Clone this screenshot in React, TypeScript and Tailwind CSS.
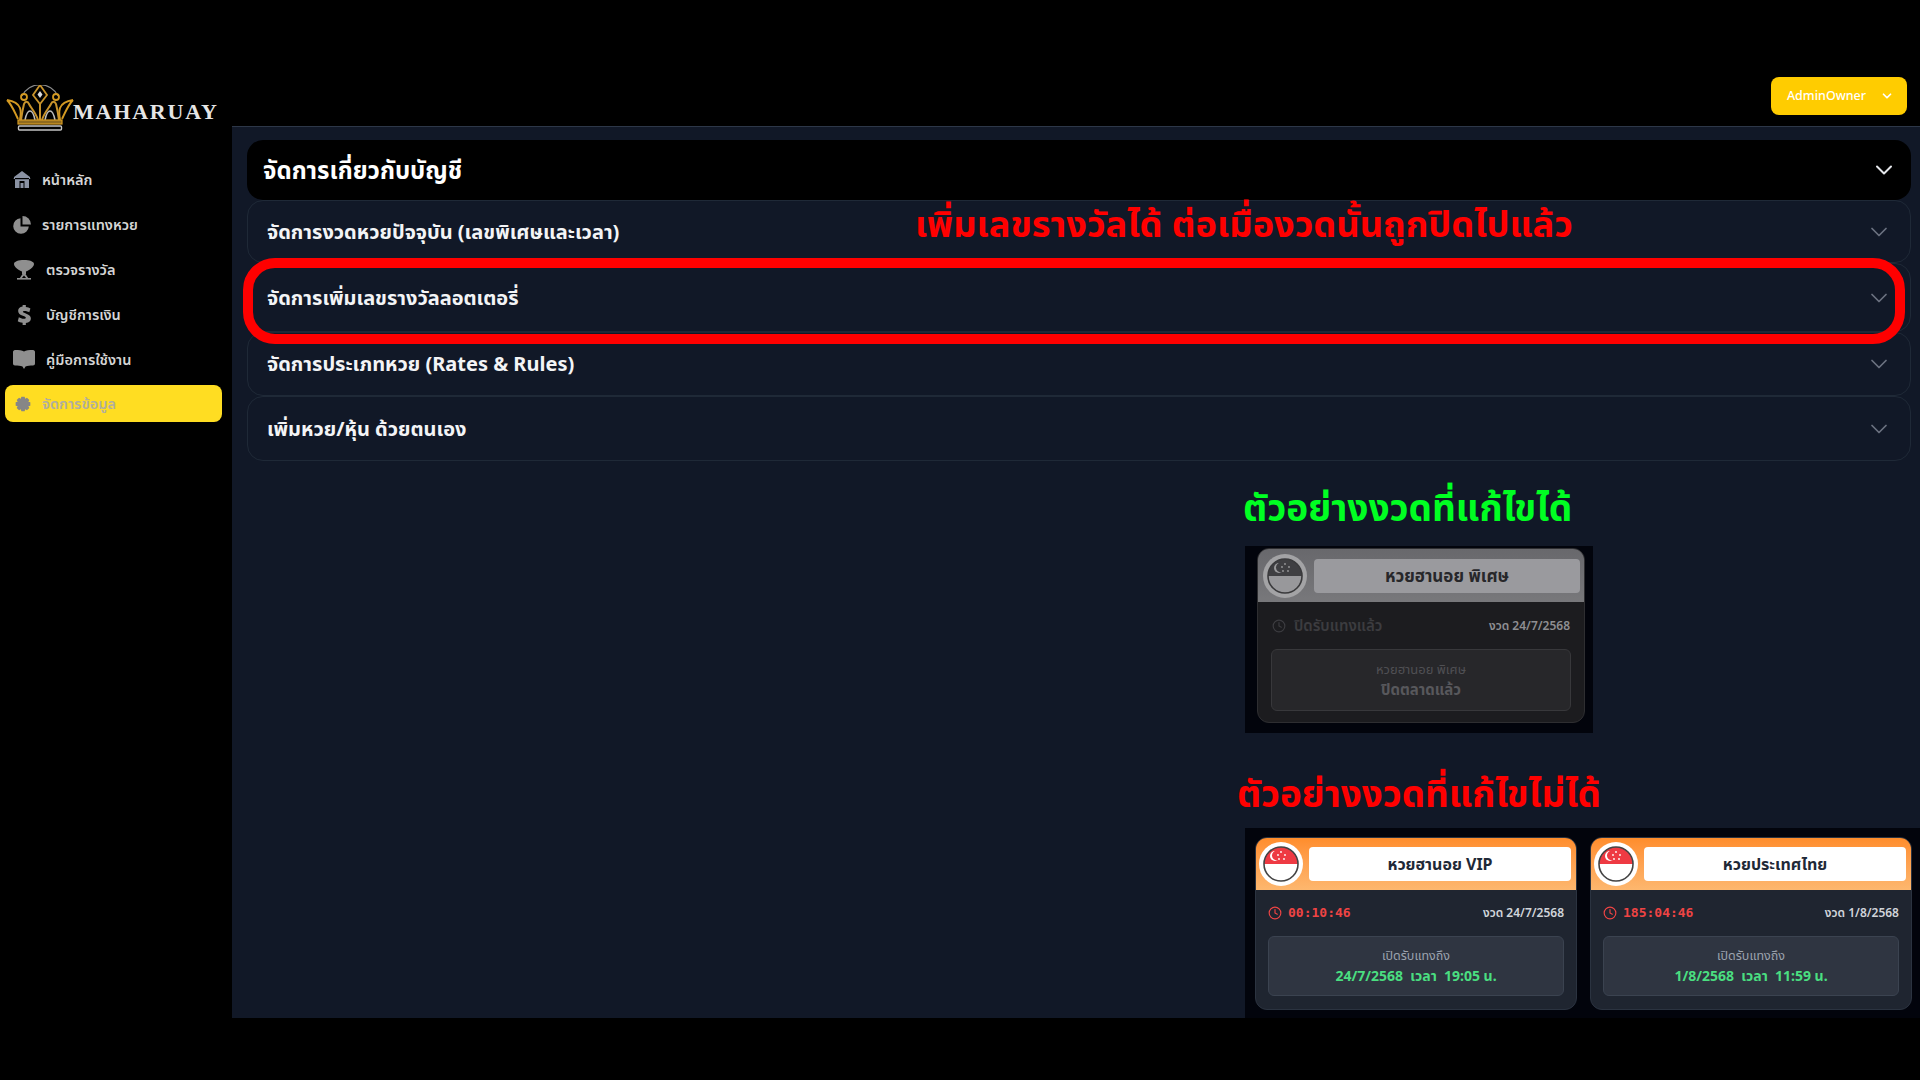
import { ChevronDown, Clock } from 'lucide-react';

const FONT = "font-['Noto_Sans','Noto_Sans_Thai','Liberation_Sans',sans-serif]";

const navItems = [
  { label: 'หน้าหลัก', icon: 'home' },
  { label: 'รายการแทงหวย', icon: 'pie' },
  { label: 'ตรวจรางวัล', icon: 'trophy' },
  { label: 'บัญชีการเงิน', icon: 'dollar' },
  { label: 'คู่มือการใช้งาน', icon: 'book' },
];

const sections = [
  { title: 'จัดการงวดหวยปัจจุบัน (เลขพิเศษและเวลา)', h: 'h-[63px]' },
  { title: 'จัดการเพิ่มเลขรางวัลลอตเตอรี่', h: 'h-[69px]' },
  { title: 'จัดการประเภทหวย (Rates & Rules)', h: 'h-[64px]' },
  { title: 'เพิ่มหวย/หุ้น ด้วยตนเอง', h: 'h-[65px]' },
];

function NavIcon({ name }: { name: string }) {
  if (name === 'home')
    return (
      <span className="w-[18px] flex shrink-0">
        <svg viewBox="0 0 18 17" className="w-[18px] h-[17px] fill-[#8a92a3]">
          <path d="M9 0 1 6v1.500L0 8h2v9h14V8h2l-1-.500V6z" />
          <rect x="2" y="7" width="14" height="1.200" fill="#000" />
          <rect x="6.500" y="10" width="5" height="7" fill="#000" />
          <rect x="7.500" y="12" width="3" height="5" fill="#8a92a3" />
        </svg>
      </span>
    );
  if (name === 'pie')
    return (
      <span className="w-[18px] flex shrink-0">
        <svg viewBox="0 0 18 18" className="w-[18px] h-[18px] fill-[#8f8f8f]">
          <path d="M7.500 2.200A7.800 7.800 0 1 0 15.800 10.500H7.500z" />
          <path d="M9.500 0v8.500H18A8.500 8.500 0 0 0 9.500 0z" />
        </svg>
      </span>
    );
  if (name === 'trophy')
    return (
      <svg viewBox="0 0 22 20" className="w-[22px] h-[20px] shrink-0 fill-[#8f8f8f]">
        <path d="M1 4c0-2.500 4.500-4 10-4s10 1.500 10 4c0 3-5 6.500-8 7.500V14H9v-2.500C6 10.500 1 7 1 4z" />
        <path d="M9.500 14h3l3 4.500h-2l-2.500-3-2.500 3h-2z" />
        <rect x="4" y="18" width="14" height="1.600" />
      </svg>
    );
  if (name === 'dollar')
    return (
      <svg viewBox="0 0 24 24" className="w-[22px] h-[22px] shrink-0 fill-[#8f8f8f]">
        <path d="M10.500 1h3.500v2.300c2 .2 3.800.8 5 1.500l-1.200 4.200c-1.500-.8-3.200-1.500-5-1.500-1.500 0-2 .5-2 1 0 .7 1 1.100 3.700 2.100 3.400 1.200 5 2.800 5 5.200 0 2.600-1.900 4.500-5.500 5V23H10.500v-2.500c-2.200-.2-4.200-.9-5.300-1.700l1.200-4.300c1.500.9 3.500 1.700 5.400 1.700 1.300 0 2.200-.5 2.200-1.300 0-.8-1-1.300-3.200-2.100-3.200-1.100-5.200-2.600-5.200-5.200 0-2.400 1.700-4.300 4.900-4.800z" />
      </svg>
    );
  return (
    <svg viewBox="0 0 22 19" className="w-[22px] h-[19px] shrink-0 fill-[#8f8f8f]">
      <path d="M0 2C0 1 .8 0 2 0c4 0 7 .4 9 1.500C13 .4 16 0 20 0c1.200 0 2 1 2 2v11.500c0 1-.8 2-2 2-3 0-5.500.3-7.500 1L11 19l-1.500-2.500c-2-.7-4.500-1-7.500-1-1.200 0-2-1-2-2z" />
    </svg>
  );
}

function GearIcon() {
  return (
    <svg viewBox="0 0 24 24" className="w-4 h-4 shrink-0 fill-[#868686]">
      <path d="M9.500 1h5l.8 3 2.600-1.500 3.600 3.600-1.500 2.600 3 .8v5l-3 .8 1.500 2.600-3.600 3.600-2.600-1.500-.8 3h-5l-.8-3-2.600 1.500-3.600-3.600 1.500-2.600-3-.8v-5l3-.8-1.500-2.600 3.600-3.600 2.600 1.500z" />
    </svg>
  );
}

function CrownLogo() {
  return (
    <svg viewBox="0 0 68 46" className="w-[68px] h-[46px] shrink-0" fill="none">
      <path d="M16 11A20 20 0 0 1 52 11" stroke="#8a8a8a" strokeWidth="1.200" />
      <path d="M34 0 27 10l7 9 7-9z" stroke="#c8932b" strokeWidth="1.800" />
      <path d="M34 6l-2.500 3.500L34 13l2.500-3.500z" fill="#dcdcdc" />
      <path d="M1 15c7 1 11 3 13 8 1 3 1 7 0 12M12 34C8 26 6 20 1 15" stroke="#d49a22" strokeWidth="2" />
      <path d="M67 15c-7 1-11 3-13 8-1 3-1 7 0 12M56 34c4-8 6-14 11-19" stroke="#d49a22" strokeWidth="2" />
      <path d="M15 35c1-7 2-12 3-16 1-3 4-3 5 0 2 4 7 9 9 16M53 35c-1-7-2-12-3-16-1-3-4-3-5 0-2 4-7 9-9 16" stroke="#c8932b" strokeWidth="2" />
      <circle cx="18" cy="12" r="3" stroke="#d49a22" strokeWidth="1.800" />
      <circle cx="50" cy="12" r="3" stroke="#d49a22" strokeWidth="1.800" />
      <path d="M19 35c1-5 3-9 5-9s4 4 5 9M49 35c-1-5-3-9-5-9s-4 4-5 9" stroke="#bdbdbd" strokeWidth="1.500" />
      <path d="M33 19h2v16h-2z" fill="#c8932b" />
      <rect x="12" y="35" width="44" height="4" fill="#8f6a1e" stroke="#d49a22" strokeWidth="1.200" />
      <rect x="12.500" y="41" width="43" height="4" rx="1" stroke="#c4c4c4" strokeWidth="1.400" />
    </svg>
  );
}

function Flag({ muted }: { muted?: boolean }) {
  const ring = muted ? 'bg-[#a3a3a5]' : 'bg-white';
  return (
    <div className={`w-[44px] h-[44px] rounded-full flex items-center justify-center shrink-0 ${ring}`}>
      <svg viewBox="0 0 36 36" className="w-[36px] h-[36px]">
        <path d="M1 18a17 17 0 0 1 34 0z" fill={muted ? '#3f3f42' : '#ee3a43'} />
        <path d="M1 18a17 17 0 0 0 34 0z" fill={muted ? '#98989b' : '#ffffff'} />
        <circle cx="18" cy="18" r="17" fill="none" stroke={muted ? '#3a3a3c' : '#444444'} strokeWidth="1.600" />
        <circle cx="12" cy="10" r="5" fill={muted ? '#9a9a9c' : '#ffffff'} />
        <circle cx="14" cy="9.500" r="5" fill={muted ? '#3f3f42' : '#ee3a43'} />
        {[[18, 6], [22, 9], [21, 13], [16, 13], [15, 9]].map(([x, y]) => (
          <circle key={`${x}-${y}`} cx={x} cy={y} r="0.900" fill={muted ? '#9a9a9c' : '#ffffff'} />
        ))}
      </svg>
    </div>
  );
}

function OpenCard({ name, time, draw, until }: { name: string; time: string; draw: string; until: string }) {
  return (
    <div className="w-[322px] h-[173px] rounded-xl bg-[#1f2530] border border-[#2b3340] overflow-hidden flex flex-col">
      <div className="h-[52px] shrink-0 bg-gradient-to-b from-[#ff8d2b] to-[#fdb76e] flex items-center pl-[3px] pr-[5px] gap-[6px]">
        <Flag />
        <div className="flex-1 h-[34px] rounded bg-white flex items-center justify-center text-[16px] font-bold text-[#1f2937]">
          {name}
        </div>
      </div>
      <div className="flex items-center justify-between px-3 h-[46px]">
        <span className="flex items-center gap-[6px] text-[13px] font-bold text-[#ef4444] font-['DejaVu_Sans_Mono',monospace]">
          <Clock size={14} strokeWidth={2} />
          {time}
        </span>
        <span className="text-[12px] font-semibold text-[#d1d5db]">{draw}</span>
      </div>
      <div className="mx-3 h-[60px] rounded-md bg-[#2f3541] border border-[#3b4350] flex flex-col items-center justify-center gap-[1px]">
        <span className="text-[12.500px] leading-[18px] text-[#9ca3af]">เปิดรับแทงถึง</span>
        <span className="text-[14px] leading-[20px] font-bold text-[#4ade80] whitespace-pre">{until}</span>
      </div>
    </div>
  );
}

export default function App() {
  return (
    <div className={`flex w-[1920px] h-[1080px] bg-black overflow-hidden relative ${FONT}`}>
      {/* Sidebar */}
      <aside className="w-[232px] shrink-0 bg-black pl-[5px] pr-[10px]">
        <div className="flex items-end mt-[85px] h-[46px] pl-[1px]">
          <CrownLogo />
          <span className="-ml-[1px] mb-[5px] text-[22px] leading-[28px] font-bold tracking-[1.800px] text-[#e5e5e5] font-['Liberation_Serif',serif]">
            MAHARUAY
          </span>
        </div>
        <nav className="mt-[26px] flex flex-col">
          {navItems.map(item => (
            <div key={item.label} className="h-[45px] flex items-center gap-[11px] pl-[8px] text-[14.500px] font-semibold text-[#d4d4d4]">
              <NavIcon name={item.icon} />
              <span>{item.label}</span>
            </div>
          ))}
          <div className="h-[37px] mt-[3px] rounded-lg bg-[#ffdd22] flex items-center gap-[11px] pl-[10px] text-[14.500px] font-semibold text-[#b0aea0]">
            <GearIcon />
            <span>จัดการข้อมูล</span>
          </div>
        </nav>
      </aside>

      <div className="flex-1 flex flex-col min-w-0">
        {/* Top bar */}
        <header className="h-[127px] shrink-0 bg-black border-b border-[#2d3748] flex justify-end items-start pt-[77px] pr-[13px]">
          <button className="w-[136px] h-[38px] rounded-lg bg-[#ffcc00] flex items-center justify-center gap-[14px] pl-[3px] text-[12.500px] font-medium text-white">
            AdminOwner
            <ChevronDown size={14} strokeWidth={3} />
          </button>
        </header>

        <main className="h-[891px] shrink-0 bg-[#111827] pl-[15px] pr-[9px] pt-[13px] overflow-hidden">
          <div className="h-[60px] rounded-2xl bg-black flex items-center justify-between pl-4 pr-[13px] text-[24px] font-bold text-white">
            <span>จัดการเกี่ยวกับบัญชี</span>
            <ChevronDown size={28} strokeWidth={1.700} className="text-[#e5e7eb]" />
          </div>
          {sections.map(s => (
            <div key={s.title} className={`${s.h} rounded-2xl border border-[#1f2937] flex items-center justify-between pl-[19px] pr-[17px] text-[20px] font-bold text-[#f3f4f6]`}>
              <span>{s.title}</span>
              <ChevronDown size={28} strokeWidth={1.500} className="text-[#6b7280]" />
            </div>
          ))}

          {/* Annotated examples */}
          <div className="ml-[996px] mt-[21px] w-[680px]">
            <h2 className="text-[37px] leading-[50px] font-bold text-[#00ff22]">ตัวอย่างงวดที่แก้ไขได้</h2>
            <div className="mt-[14px] ml-[2px] w-[348px] h-[187px] bg-[#02040c] pl-[12px] pt-[2px]">
              <div className="w-[328px] h-[175px] rounded-xl bg-[#1c1c1f] border border-[#2e2e31] overflow-hidden flex flex-col">
                <div className="h-[53px] shrink-0 bg-gradient-to-b from-[#68686c] to-[#78787b] flex items-center pl-[5px] pr-[4px] gap-[7px]">
                  <Flag muted />
                  <div className="flex-1 h-[34px] rounded bg-[#9a9a9e] flex items-center justify-center text-[17px] font-bold text-[#27272a]">
                    หวยฮานอย พิเศษ
                  </div>
                </div>
                <div className="flex items-center justify-between px-[14px] h-[47px]">
                  <span className="flex items-center gap-2 text-[15px] font-semibold text-[#3c3c40]">
                    <Clock size={14} strokeWidth={2} />
                    ปิดรับแทงแล้ว
                  </span>
                  <span className="text-[12px] font-semibold text-[#8e8e92]">งวด 24/7/2568</span>
                </div>
                <div className="mx-[13px] h-[62px] rounded-md bg-[#27272a] border border-[#38383b] flex flex-col items-center justify-center">
                  <span className="text-[13px] leading-[18px] text-[#505054]">หวยฮานอย พิเศษ</span>
                  <span className="text-[15px] leading-[22px] font-bold text-[#58585c]">ปิดตลาดแล้ว</span>
                </div>
              </div>
            </div>
            <h2 className="mt-[35px] -ml-[6px] text-[36.800px] leading-[50px] font-bold text-[#ff0000]">ตัวอย่างงวดที่แก้ไขไม่ได้</h2>
            <div className="mt-[10px] ml-[2px] w-[676px] h-[192px] bg-[#02040c] flex gap-[13px] pl-[10px] pt-[9px]">
              <OpenCard name="หวยฮานอย VIP" time="00:10:46" draw="งวด 24/7/2568" until="24/7/2568  เวลา  19:05 น." />
              <OpenCard name="หวยประเทศไทย" time="185:04:46" draw="งวด 1/8/2568" until="1/8/2568  เวลา  11:59 น." />
            </div>
          </div>
        </main>

        <div className="flex-1 bg-black" />
      </div>

      {/* Red annotations over the page */}
      <div className="absolute left-[915px] top-[198px] text-[36.200px] leading-[50px] font-bold text-[#ff0000] whitespace-nowrap">
        เพิ่มเลขรางวัลได้ ต่อเมื่องวดนั้นถูกปิดไปแล้ว
      </div>
      <div className="absolute left-[243px] top-[258px] w-[1662px] h-[86px] rounded-[32px] border-[10px] border-[#ff0000]" />
    </div>
  );
}
